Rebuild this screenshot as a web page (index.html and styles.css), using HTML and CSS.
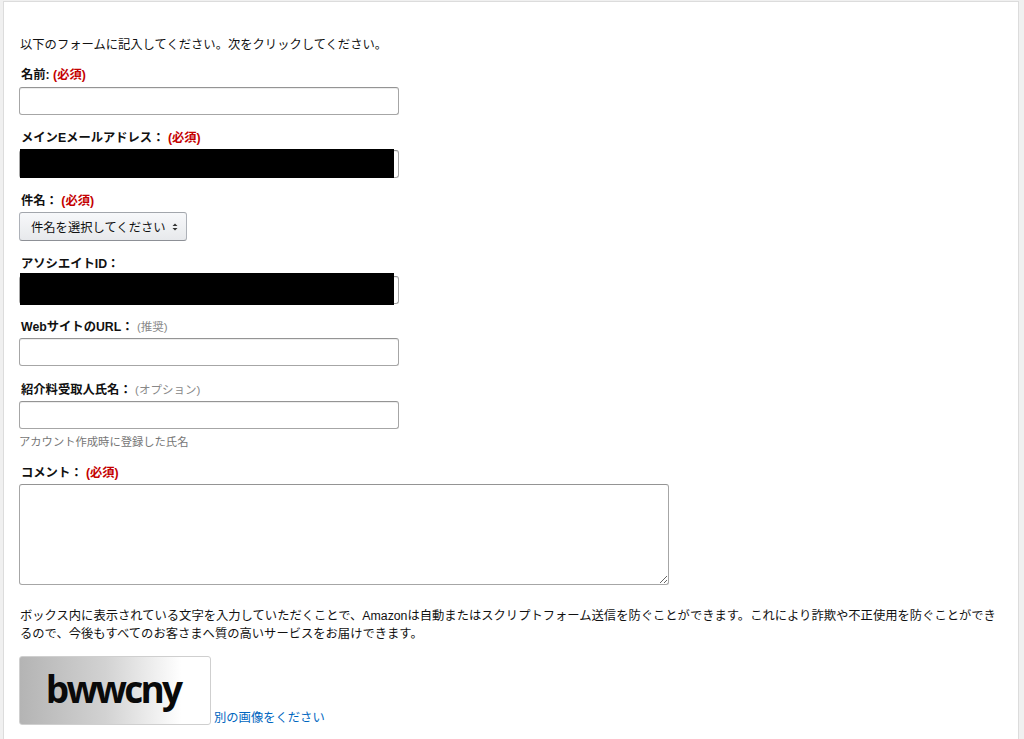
FILE: index.html
```html
<!DOCTYPE html>
<html lang="ja">
<head>
<meta charset="utf-8">
<title>お問い合わせ</title>
<link rel="stylesheet" href="styles.css">
</head>
<body>
<div class="card">
  <p class="intro">以下のフォームに記入してください。次をクリックしてください。</p>

  <div class="field">
    <div class="label">名前: <span class="req">(必須)</span></div>
    <input class="text" type="text">
  </div>

  <div class="field f-email">
    <div class="label">メインEメールアドレス： <span class="req">(必須)</span></div>
    <div class="redact-wrap">
      <input class="text" type="text">
      <span class="redact"></span>
    </div>
  </div>

  <div class="field f-select">
    <div class="label">件名： <span class="req">(必須)</span></div>
    <div class="select">件名を選択してください
      <svg class="arrows" width="6" height="8" viewBox="0 0 6 8"><path d="M3 0.5 L5.5 3 H0.5 Z M3 7.5 L5.5 5 H0.5 Z" fill="#333"/></svg>
    </div>
  </div>

  <div class="field f-id">
    <div class="label">アソシエイトID：</div>
    <div class="redact-wrap">
      <input class="text" type="text">
      <span class="redact"></span>
    </div>
  </div>

  <div class="field f-url">
    <div class="label">WebサイトのURL： <span class="opt">(推奨)</span></div>
    <input class="text" type="text">
  </div>

  <div class="field f-payee">
    <div class="label">紹介料受取人氏名： <span class="opt">(オプション)</span></div>
    <input class="text" type="text">
    <div class="hint">アカウント作成時に登録した氏名</div>
  </div>

  <div class="field f-comment">
    <div class="label">コメント： <span class="req">(必須)</span></div>
    <textarea class="comment"></textarea>
  </div>

  <p class="note">ボックス内に表示されている文字を入力していただくことで、Amazonは自動またはスクリプトフォーム送信を防ぐことができます。これにより詐欺や不正使用を防ぐことができるので、今後もすべてのお客さまへ質の高いサービスをお届けできます。</p>

  <div class="captcha-row">
    <div class="captcha"><span class="captcha-text">bwwcny</span></div>
    <a class="link" href="#">別の画像をください</a>
  </div>
</div>
</body>
</html>
```

FILE: styles.css
```css
html, body {
  margin: 0;
  padding: 0;
  background: #f0f0f0;
  height: 100%;
}

body {
  font-family: "Liberation Sans", "Noto Sans CJK JP", sans-serif;
  font-size: 12.3px;
  color: #111;
  overflow: hidden;
}

.card {
  margin: 1px 5px 0 3px;
  background: #fff;
  border: 1px solid #dcdcdc;
  border-bottom: none;
  padding: 34px 18px 20px 15px;
  min-height: 690px;
}

.intro {
  margin: 0 0 12px 1px;
  line-height: 18px;
}

.field {
  margin-bottom: 14px;
}

.label {
  font-weight: bold;
  line-height: 18px;
  margin-left: 2px;
  margin-bottom: 3px;
}

.req {
  color: #c40000;
}

.opt {
  color: #888;
  font-weight: normal;
  font-size: 11.5px;
}

.text {
  display: block;
  box-sizing: border-box;
  width: 380px;
  height: 28px;
  margin: 0;
  border: 1px solid #a6a6a6;
  border-top-color: #949494;
  border-radius: 3px;
  background: #fff;
  box-shadow: 0 1px 0 rgba(255,255,255,.5), 0 1px 0 rgba(0,0,0,.07) inset;
}

.redact-wrap {
  position: relative;
  width: 380px;
}

.redact {
  position: absolute;
  left: 1px;
  top: -1px;
  width: 374px;
  height: 29px;
  background: #000;
}

.f-id .redact {
  top: -3px;
  height: 32px;
}

.f-select .label {
  margin-bottom: 2px;
}

.select {
  box-sizing: border-box;
  width: 168px;
  height: 29px;
  display: flex;
  align-items: center;
  justify-content: space-between;
  padding: 0 8px 0 11px;
  border: 1px solid #adb1b8;
  border-top-color: #a2a6ac;
  border-bottom-color: #8d9096;
  border-radius: 3px;
  background: linear-gradient(to bottom, #f7f8fa, #e7e9ec);
  color: #111;
  font-size: 12.3px;
}

.f-select {
  margin-bottom: 14px;
}

.f-url .label,
.f-payee .label,
.f-comment .label {
  margin-bottom: 2px;
}

.f-url {
  margin-bottom: 15px;
}

.hint {
  color: #767676;
  font-size: 11.3px;
  line-height: 18px;
  margin-top: 4px;
}

.f-payee {
  margin-bottom: 13px;
}

.comment {
  display: block;
  box-sizing: border-box;
  width: 650px;
  height: 101px;
  margin: 0;
  border: 1px solid #a6a6a6;
  border-top-color: #949494;
  border-radius: 3px;
  font-family: inherit;
}

.f-comment {
  margin-bottom: 22px;
}

.note {
  margin: 0 0 13px 1px;
  line-height: 18px;
}

.captcha-row {
  display: flex;
  align-items: flex-end;
}

.captcha {
  box-sizing: border-box;
  width: 192px;
  height: 69px;
  border: 1px solid #cfcfcf;
  border-radius: 3px;
  background: linear-gradient(to right, #b4b4b4 0%, #d2d2d2 45%, #ffffff 85%);
  display: flex;
  align-items: center;
  justify-content: center;
}

.captcha-text {
  font-family: "Open Sans", "DejaVu Sans", sans-serif;
  font-weight: bold;
  font-size: 37px;
  letter-spacing: -2.8px;
  color: #0a0a0a;
  margin-left: -4px;
  margin-top: -4px;
}

.link {
  color: #0066c0;
  text-decoration: none;
  font-size: 12.3px;
  line-height: 18px;
  margin-left: 3px;
  margin-bottom: -2px;
}
```
